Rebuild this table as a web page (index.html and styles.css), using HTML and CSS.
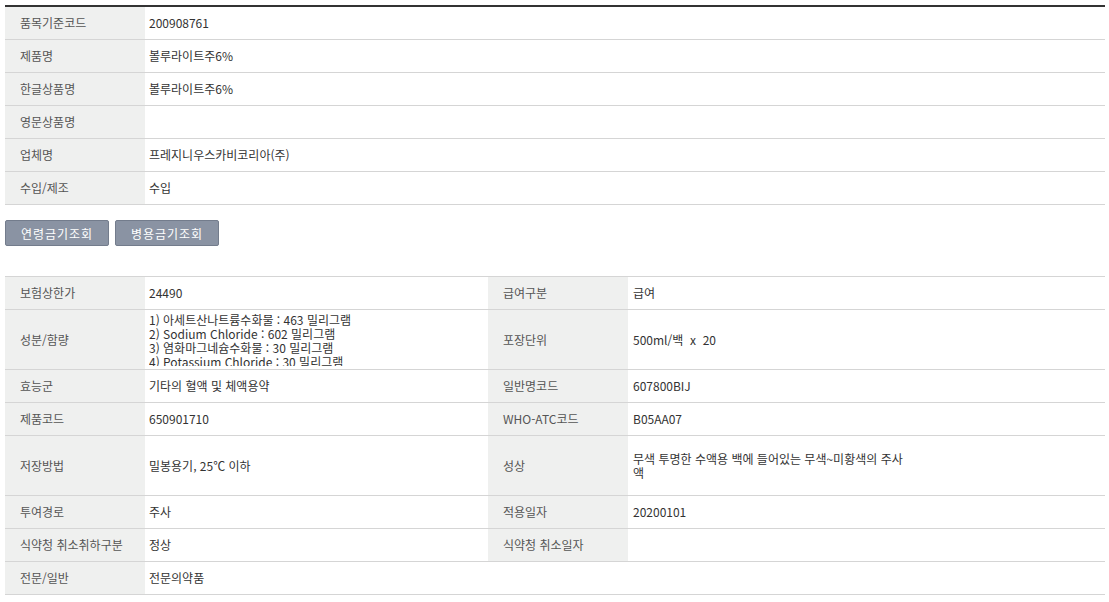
FILE: index.html
```html
<!DOCTYPE html>
<html lang="ko">
<head>
	<meta charset="UTF-8" />
	<meta name="viewport" content="width=device-width, initial-scale=1.0" />
	<title>의약품 상세정보</title>
	<link rel="stylesheet" href="styles.css">
</head>
<body>
	<div class="wrap">
		<table class="info info-top">
			<colgroup>
				<col class="col-th">
				<col>
			</colgroup>
			<tr><th>품목기준코드</th><td>200908761</td></tr>
			<tr><th>제품명</th><td>볼루라이트주6%</td></tr>
			<tr><th>한글상품명</th><td>볼루라이트주6%</td></tr>
			<tr><th>영문상품명</th><td></td></tr>
			<tr><th>업체명</th><td>프레지니우스카비코리아(주)</td></tr>
			<tr><th>수입/제조</th><td>수입</td></tr>
		</table>

		<div class="btns">
			<button type="button" class="bt-gray">연령금기조회</button>
			<button type="button" class="bt-gray">병용금기조회</button>
		</div>

		<table class="info info-detail">
			<colgroup>
				<col class="col-th">
				<col class="col-td">
				<col class="col-th">
				<col>
			</colgroup>
			<tr>
				<th>보험상한가</th><td>24490</td>
				<th>급여구분</th><td class="pad">급여</td>
			</tr>
			<tr class="tall">
				<th>성분/함량</th>
				<td>
					<div class="ingr">
						1) 아세트산나트륨수화물 : 463 밀리그램<br>
						2) Sodium Chloride : 602 밀리그램<br>
						3) 염화마그네슘수화물 : 30 밀리그램<br>
						4) Potassium Chloride : 30 밀리그램
					</div>
				</td>
				<th>포장단위</th><td class="pad">500ml/백 &nbsp;x&nbsp; 20</td>
			</tr>
			<tr>
				<th>효능군</th><td>기타의 혈액 및 체액용약</td>
				<th>일반명코드</th><td class="pad">607800BIJ</td>
			</tr>
			<tr>
				<th>제품코드</th><td>650901710</td>
				<th>WHO-ATC코드</th><td class="pad">B05AA07</td>
			</tr>
			<tr class="tall">
				<th>저장방법</th><td>밀봉용기, 25℃ 이하</td>
				<th>성상</th><td class="pad"><div class="desc">무색 투명한 수액용 백에 들어있는 무색~미황색의 주사액</div></td>
			</tr>
			<tr>
				<th>투여경로</th><td>주사</td>
				<th>적용일자</th><td class="pad">20200101</td>
			</tr>
			<tr>
				<th>식약청 취소취하구분</th><td>정상</td>
				<th>식약청 취소일자</th><td class="pad"></td>
			</tr>
			<tr>
				<th>전문/일반</th><td colspan="3">전문의약품</td>
			</tr>
		</table>
	</div>
</body>
</html>
```

FILE: styles.css
```css
body{
	margin: 0;
	font-family: "Noto Sans CJK KR", "Liberation Sans", sans-serif;
	font-size: 12px;
	color: #333;
	background: #fff;
}
.wrap{
	width: 1100px;
	padding: 5px 0 0 5px;
}
.info{
	width: 100%;
	border-collapse: collapse;
	table-layout: fixed;
}
.info-top{
	border-top: 2px solid #333;
}
.info-detail{
	border-top: 1px solid #d5d5d5;
}
.col-th{
	width: 140px;
}
.col-td{
	width: 343px;
}
.info th,
.info td{
	height: 32px;
	padding: 0;
	border-bottom: 1px solid #d5d5d5;
	text-align: left;
	vertical-align: middle;
	line-height: 14px;
}
.info th{
	padding-left: 15px;
	background: #eff0ef;
	font-weight: normal;
	color: #555;
}
.info td{
	padding-left: 4px;
}
.info td.pad{
	padding-left: 5px;
}
.info tr.tall th,
.info tr.tall td{
	height: 59px;
}
.ingr{
	height: 53px;
	overflow: hidden;
}
.desc{
	width: 272px;
}
.btns{
	display: flex;
	gap: 6px;
	margin: 15px 0 30px;
}
.bt-gray{
	width: 104px;
	height: 26px;
	padding: 0;
	border: 1px solid #737c8c;
	border-radius: 2px;
	background: #8a93a3;
	font-family: inherit;
	font-size: 12px;
	color: #fff;
	letter-spacing: 1px;
	cursor: pointer;
}
```
